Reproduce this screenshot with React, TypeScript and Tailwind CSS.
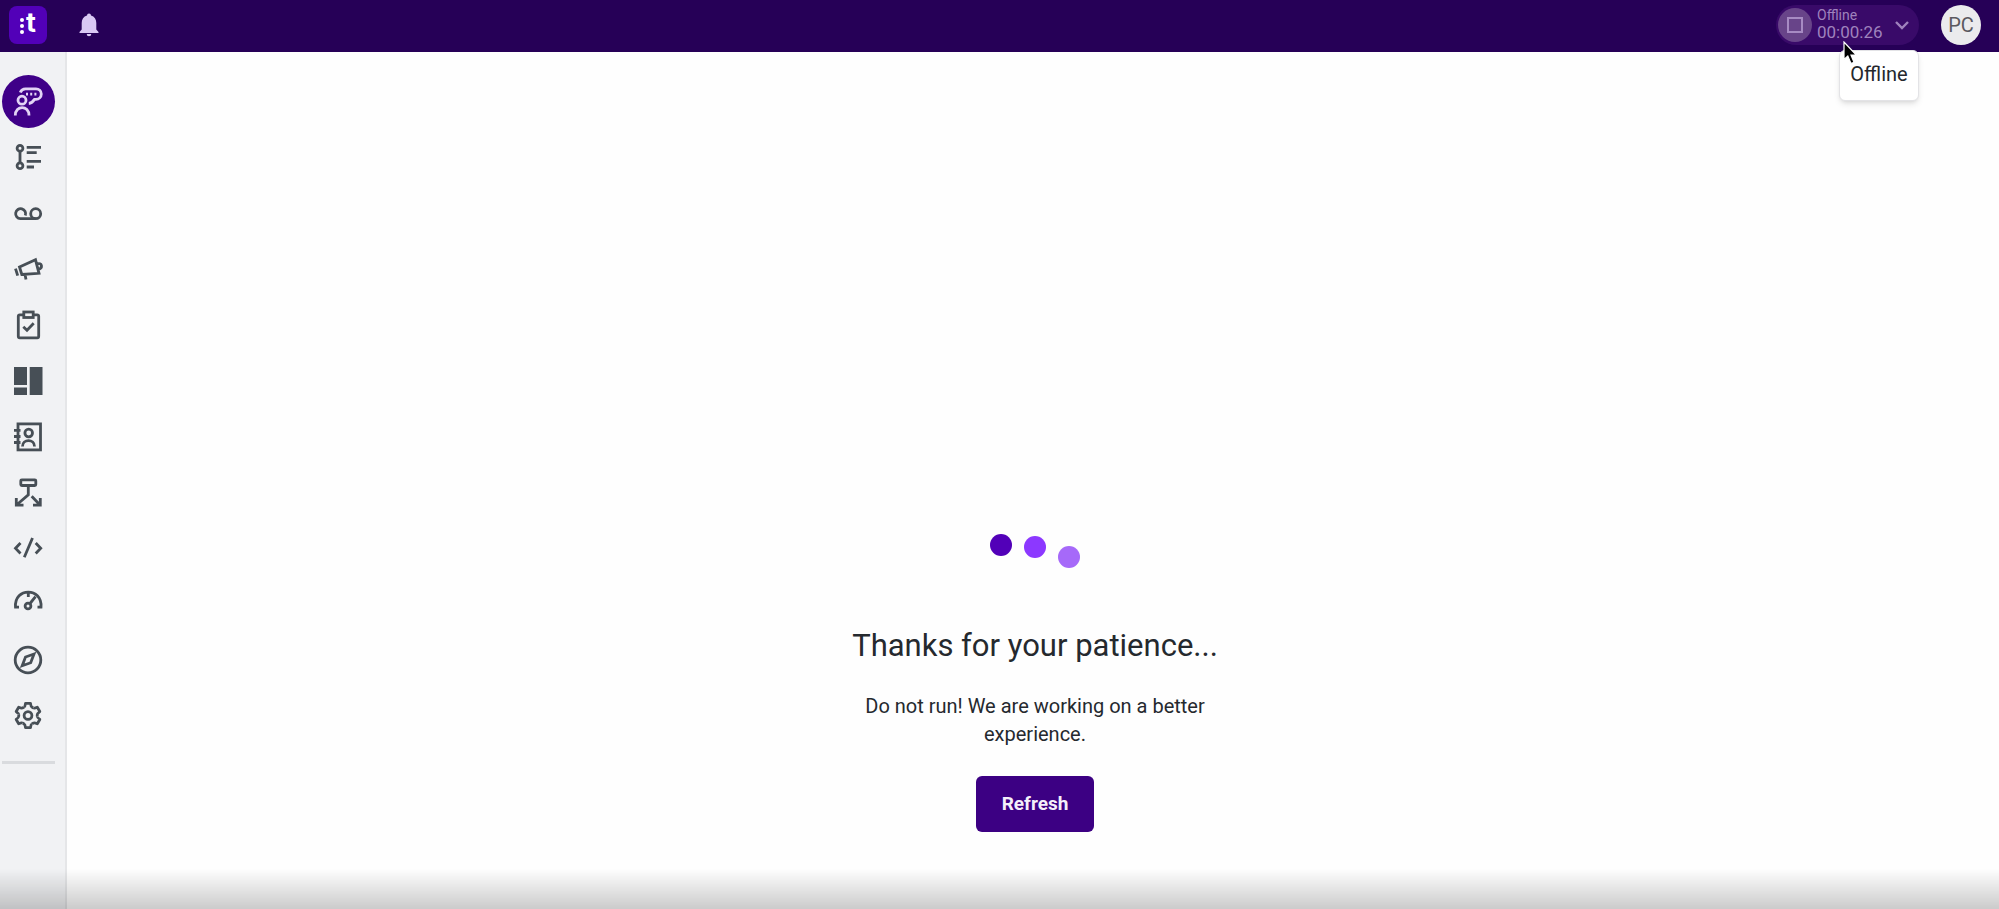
import React from "react";

type IconProps = { children: React.ReactNode };

const Icon: React.FC<IconProps> = ({ children }) => (
  <svg
    viewBox="0 0 28 28"
    className="h-7 w-7 overflow-visible"
    fill="none"
    stroke="currentColor"
    strokeWidth="2.8"
    aria-hidden="true"
  >
    {children}
  </svg>
);

const AgentIcon = () => (
  <Icon>
    <circle cx="8" cy="13.2" r="4" />
    <path d="M1.3 28.5C1.3 18 15 18 15 28.5" />
    <path d="M6.3 5.5C7.2 3 9 1.8 11.5 1.8H22a5.2 5.2 0 0 1 0 10.6H20.5C18.5 15.3 17.5 16.3 14.8 16.5" />
    <path d="M12 7.2h2M16.2 7.2h2M20.4 7.2h2" />
  </Icon>
);

const QueueIcon = () => (
  <Icon>
    <circle cx="6" cy="5.3" r="2.9" />
    <circle cx="6" cy="22.8" r="2.9" />
    <path d="M6 8v12M12.7 4.3H27M12.7 9.7h10M12.7 18.3H27M12.7 24H20" />
  </Icon>
);

const VoicemailIcon = () => (
  <Icon>
    <circle cx="21.7" cy="14.7" r="5" />
    <path d="M11.3 16.5A5 5 0 1 0 6.4 19.7H21.7" />
  </Icon>
);

const CampaignIcon = () => (
  <Icon>
    <path d="M5.5 12 21.5 4.8 25 18.3 7.8 19.5ZM1.5 13.7 3.7 20.7M11 19.5 12 24.5M23 9C28 7 29.5 13 24 14.5" />
  </Icon>
);

const TasksIcon = () => (
  <Icon>
    <rect x="4.3" y="3.8" width="20.4" height="23" rx="1.5" />
    <rect x="9.8" y="1" width="9.4" height="5.5" fill="#f1f2f4" />
    <path d="M9.3 15.7 13 19.2 19.7 12.3" />
  </Icon>
);

const DashboardIcon = () => (
  <Icon>
    <path
      d="M0 0h13v18H0ZM0 20.5h13V28H0ZM15.7 0H28.5V28H15.7Z"
      fill="currentColor"
      stroke="none"
    />
  </Icon>
);

const ContactsIcon = () => (
  <Icon>
    <rect x="4" y="0.9" width="22.5" height="26" />
    <circle cx="14.7" cy="10" r="3.8" />
    <path d="M8.5 23.5C8.5 15.7 20.5 15.7 20.5 23.5M0 7.3h6.5M0 13.5h6.5M0 19.5h6.5" />
  </Icon>
);

const FlowIcon = () => (
  <Icon>
    <rect x="6.8" y="0.8" width="15" height="5.7" rx="1" />
    <path d="M14.3 6.5v9.3L2.5 26M2.3 19v7.2H9.5M17.7 17.2 26 26M26.3 19v7.2H19" />
  </Icon>
);

const CodeIcon = () => (
  <Icon>
    <path d="M6.5 8 1.5 13.3 6.5 18.5M18.5 3 10.3 22.2M21.7 8l5 5.3-5 5.2" />
  </Icon>
);

const GaugeIcon = () => (
  <Icon>
    <path d="M5 16.2H1.5C0-4 28.5-4 27 16.2H23.5M14.3 2v4M16 12.5 21.5 5.7" />
    <circle cx="14" cy="15" r="2.9" />
  </Icon>
);

const ExploreIcon = () => (
  <Icon>
    <circle cx="14" cy="13" r="12.8" />
    <path d="M20 7 16.7 15.7 8.2 18.7 11.5 10Z" />
  </Icon>
);

const SettingsIcon = () => (
  <Icon>
    <g transform="translate(14 12.5)" strokeLinejoin="round">
      {[0, 60, 120, 180, 240, 300].map((angle) => (
        <path
          key={angle}
          d="M-3.9-8.5Q-2.9-9-2.5-12.2H2.5Q2.9-9 3.9-8.5 4.5-7.9 5.41-7.63"
          transform={`rotate(${angle})`}
        />
      ))}
      <circle r="3.9" />
    </g>
  </Icon>
);

const links = [
  { label: "Conversations", icon: AgentIcon },
  { label: "Queues", icon: QueueIcon },
  { label: "Voicemail", icon: VoicemailIcon },
  { label: "Campaigns", icon: CampaignIcon },
  { label: "Tasks", icon: TasksIcon },
  { label: "Dashboard", icon: DashboardIcon },
  { label: "Contacts", icon: ContactsIcon },
  { label: "Studio", icon: FlowIcon },
  { label: "Developers", icon: CodeIcon },
  { label: "Live", icon: GaugeIcon },
  { label: "Explore", icon: ExploreIcon },
  { label: "Settings", icon: SettingsIcon },
];

const Header: React.FC = () => (
  <header className="flex h-[52px] items-center justify-between bg-[#260057] pr-[18px] pb-[3px] pl-[9px]">
    <div className="flex items-center gap-8">
      <a
        href="#home"
        aria-label="Home"
        className="flex h-[38px] w-[38px] items-center justify-center gap-[2px] rounded-lg bg-[#5200b8] text-white"
      >
        <span className="flex flex-col gap-[2px] pt-[2px]">
          <span className="h-1 w-1 rounded-full bg-white" />
          <span className="h-1 w-1 rounded-full bg-white" />
          <span className="h-1 w-1 rounded-full bg-white" />
        </span>
        <span className="pb-[3px] font-[Inter,sans-serif] text-[27px] leading-7 font-bold">t</span>
      </a>
      <button type="button" aria-label="Notifications" className="text-[#d9c8f3]">
        <svg viewBox="0 0 20 24" className="h-6 w-5" fill="currentColor" aria-hidden="true">
          <path d="M10 0.5a2 2 0 0 1 2 2C15.5 3.5 17.3 6.5 17.3 10v6.5L19.5 19v1H0.5v-1L2.7 16.5V10C2.7 6.5 4.5 3.5 8 2.5a2 2 0 0 1 2-2ZM7.7 21h4.6a2.3 2.3 0 0 1-4.6 0Z" />
        </svg>
      </button>
    </div>
    <div className="flex items-center gap-[22px]">
      <div className="relative">
        <button
          type="button"
          aria-describedby="status-tip"
          className="flex h-10 w-[143px] items-center rounded-full bg-[#390a69] pr-[10px] pl-[2px] text-left text-[#9f82bd]"
        >
          <span className="flex h-[34px] w-[34px] items-center justify-center rounded-full bg-[#684489]">
            <span className="h-4 w-4 border-2 border-[#a78bc3]" />
          </span>
          <span className="ml-[5px] flex flex-col pb-[2px]">
            <span className="text-[14px] leading-4">Offline</span>
            <span className="text-[17px] leading-[18px]">00:00:26</span>
          </span>
          <svg
            viewBox="0 0 14 8"
            className="ml-auto h-2 w-[14px] overflow-visible"
            fill="none"
            stroke="currentColor"
            strokeWidth="2.4"
            aria-hidden="true"
          >
            <path d="M1 1l6 6 6-6" />
          </svg>
        </button>
        <div
          id="status-tip"
          role="tooltip"
          className="absolute top-[45px] right-0 flex h-[51px] w-20 items-center justify-center rounded-md border border-[#e3e3e6] bg-white pb-[2px] text-[20px] text-[#25282d] shadow-md"
        >
          Offline
        </div>
        {/* mouse pointer */}
        <svg
          viewBox="0 0 14 24"
          className="absolute top-9 left-[67px] h-6 w-[14px]"
          fill="#000"
          stroke="#fff"
          strokeWidth="1.2"
          aria-hidden="true"
        >
          <path d="M1 1V18.5L4.8 15 8 22.5 11 21.2 8 14H13.3Z" />
        </svg>
      </div>
      <button
        type="button"
        className="h-10 w-10 rounded-full bg-[#ebebed] text-center text-[20px] text-[#5b5960]"
      >
        PC
      </button>
    </div>
  </header>
);

const Sidebar: React.FC = () => (
  <nav className="w-[67px] shrink-0 border-r-2 border-[#e5e6e8] bg-[#f1f2f4] pt-[21px]">
    <ul className="w-14">
      {links.map(({ label, icon: LinkIcon }, i) => (
        <li key={label} className="flex h-14 items-center justify-center">
          <a
            href={`#${label.toLowerCase()}`}
            aria-label={label}
            className={
              i === 0
                ? "flex h-[53px] w-[53px] items-center justify-center rounded-full bg-[#3f0088] text-[#e2d3f5]"
                : "text-[#474f56]"
            }
          >
            <LinkIcon />
          </a>
        </li>
      ))}
    </ul>
    <hr className="mt-4 ml-[2px] w-[53px] border-t-[3px] border-[#d9dbde]" />
  </nav>
);

const App: React.FC = () => {
  return (
    <div className="flex min-h-screen flex-col bg-[#fefefe] font-[Roboto,sans-serif] text-[#25292e]">
      <Header />
      <div className="flex flex-1">
        <Sidebar />
        <main className="flex flex-1 flex-col items-center justify-end pb-[77px] pl-1 text-center">
          <div className="flex h-9 gap-3" role="status" aria-label="Loading">
            <span className="h-[22px] w-[22px] rounded-full bg-[#5200b8]" />
            <span className="mt-[2px] h-[22px] w-[22px] rounded-full bg-[#8c38ff]" />
            <span className="mt-3 h-[22px] w-[22px] rounded-full bg-[#a669f9]" />
          </div>
          <h1 className="mt-14 text-[31px] leading-10">Thanks for your patience...</h1>
          <p className="mt-[26px] w-[360px] text-[20px] leading-7">
            Do not run! We are working on a better experience.
          </p>
          <button
            type="button"
            className="mt-7 h-14 rounded-md bg-[#3c0083] px-[26px] text-[19px] font-bold text-[#f4effa]"
          >
            Refresh
          </button>
        </main>
      </div>
      <div className="pointer-events-none fixed inset-x-0 bottom-0 h-10 bg-linear-to-b from-transparent to-black/20" />
    </div>
  );
};

export default App;
